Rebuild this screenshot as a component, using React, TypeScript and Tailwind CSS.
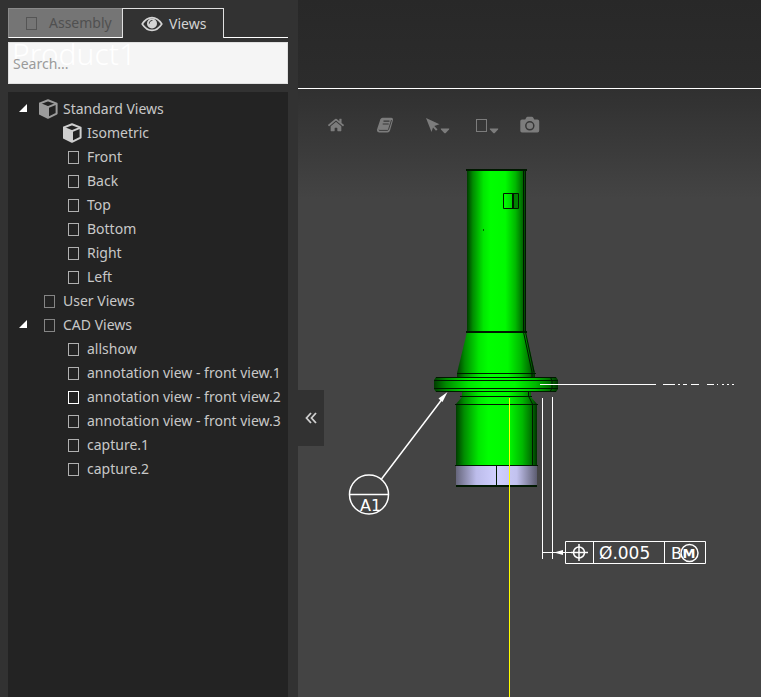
import React, { useState } from 'react';
import { FaHome } from 'react-icons/fa';

type View = { name: string; cube?: boolean; active?: boolean };
type Group = { name: string; cube?: boolean; views: View[] };

const groups: Group[] = [
  {
    name: 'Standard Views',
    cube: true,
    views: [
      { name: 'Isometric', cube: true },
      { name: 'Front' },
      { name: 'Back' },
      { name: 'Top' },
      { name: 'Bottom' },
      { name: 'Right' },
      { name: 'Left' },
    ],
  },
  { name: 'User Views', views: [] },
  {
    name: 'CAD Views',
    views: [
      { name: 'allshow' },
      { name: 'annotation view - front view.1' },
      { name: 'annotation view - front view.2', active: true },
      { name: 'annotation view - front view.3' },
      { name: 'capture.1' },
      { name: 'capture.2' },
    ],
  },
];

const Box = ({ className = 'border-[#a5a5a5]' }: { className?: string }) => (
  <span className={`inline-block h-[13px] w-[11px] shrink-0 border ${className}`} />
);

const CubeIcon = ({ className }: { className: string }) => (
  <svg viewBox="1 0 20 20" className={`h-5 w-5 shrink-0 ${className}`}>
    <path d="M10 1.3 18.6 4.6V14.6L10 18.8 1.4 14.6V4.6Z" fill="none" stroke="currentColor" strokeWidth="2" strokeLinejoin="round" />
    <path d="M1.4 4.8 10 8.4V18.8L1.4 14.6Z" fill="currentColor" />
    <path d="M1.4 4.6 10 8.2 18.6 4.6M10 8.2V18.8" fill="none" stroke="currentColor" strokeWidth="2" strokeLinejoin="round" />
  </svg>
);

const EyeIcon = () => (
  <svg viewBox="0 0 22 16" className="h-4 w-[22px] shrink-0">
    <path d="M1.2 8C4 3.6 7.3 1.6 11 1.6S18 3.6 20.8 8C18 12.4 14.7 14.4 11 14.4S4 12.4 1.2 8Z" fill="none" stroke="currentColor" strokeWidth="1.6" />
    <circle cx="11" cy="7.5" r="5" fill="currentColor" />
    <path d="M8.3 7.2C8.3 5.5 9.4 4.5 11 4.5" fill="none" stroke="#323232" strokeWidth="1" strokeLinecap="round" />
  </svg>
);

const BookIcon = () => (
  <svg viewBox="0 0 18 16" className="h-4 w-[18px]">
    <path d="M6.5 0.8H15.5Q17.4 1.2 17 3L14 13.5Q13.4 15.4 11.5 15.4H3Q0.6 15 1 12.5L4.3 2.5Q5 0.8 6.5 0.8Z" fill="currentColor" />
    <path d="M7.5 4.2H13.5M6.7 7H12.7" stroke="#363636" strokeWidth="1.2" />
    <path d="M2.8 12.8Q2.8 13.4 4 13.4H11.3Q12.2 13.4 12.5 12.5L15.5 3" fill="none" stroke="#363636" strokeWidth="0.9" />
  </svg>
);

const CursorIcon = () => (
  <svg viewBox="0 0 16 16" className="h-4 w-4">
    <path d="M2 1 15.5 7.2 10.3 9 13.5 12.5 12 13.8 9 10.5 7.5 15Z" fill="currentColor" />
  </svg>
);

const CameraIcon = () => (
  <svg viewBox="0 0 20 18" className="h-[18px] w-5">
    <path d="M2 3.5H5.2L6.5 1.3Q6.8 0.8 7.5 0.8H12Q12.7 0.8 13 1.3L14.3 3.5H17.5Q19.2 3.5 19.2 5.2V14.8Q19.2 16.5 17.5 16.5H2Q0.3 16.5 0.3 14.8V5.2Q0.3 3.5 2 3.5Z" fill="currentColor" />
    <circle cx="9.8" cy="9.8" r="4" fill="none" stroke="#363636" strokeWidth="1.5" />
  </svg>
);

const Caret = () => (
  <svg viewBox="0 0 10 6" className="h-[6px] w-[10px]">
    <path d="M1 0.5H9Q9.5 0.8 9 1.4L5.5 5.2Q5 5.5 4.5 5.2L1 1.4Q0.5 0.8 1 0.5Z" fill="currentColor" />
  </svg>
);

const TreeIcon = ({ cube, className, boxClass }: { cube?: boolean; className: string; boxClass?: string }) => (
  <span className="flex w-5 shrink-0 items-center justify-center">
    {cube ? <CubeIcon className={className} /> : <Box className={boxClass} />}
  </span>
);

const ViewTree = () => {
  const [closed, setClosed] = useState<string[]>([]);

  const toggle = (name: string) =>
    setClosed(closed.includes(name) ? closed.filter((n) => n !== name) : [...closed, name]);

  return (
    <ul className="flex-1 bg-[#232323] pt-[5px] text-[#c8c8c8]">
      {groups.map((group) => (
        <li key={group.name}>
          <button onClick={() => toggle(group.name)} className="flex h-6 w-full items-center pl-[10px] whitespace-nowrap">
            <span className="w-[21px] shrink-0">
              {group.views.length > 0 && (
                <svg viewBox="0 0 10 10" className="h-[10px] w-[10px]">
                  <path d="M9 0V8H1Z" fill="#fff" />
                </svg>
              )}
            </span>
            <TreeIcon cube={group.cube} className="text-[#9c9c9c]" boxClass="border-[#858585]" />
            <span className="pl-1">{group.name}</span>
          </button>
          {!closed.includes(group.name) && (
            <ul>
              {group.views.map((view) => (
                <li key={view.name}>
                  <button className="flex h-6 w-full items-center pl-[55px] whitespace-nowrap">
                    <TreeIcon
                      cube={view.cube}
                      className="text-[#cfcfcf]"
                      boxClass={view.active ? 'border-white' : 'border-[#b0b0b0]'}
                    />
                    <span className="pl-1">{view.name}</span>
                  </button>
                </li>
              ))}
            </ul>
          )}
        </li>
      ))}
    </ul>
  );
};

const Sidebar = () => (
  <aside className="relative flex w-[298px] shrink-0 flex-col bg-[#323232] px-2 pt-2 pr-[10px]">
    <div className="flex h-[30px]">
      <button className="flex w-[114px] items-center gap-3 border border-r-0 border-[#8a8a8a] border-b-white bg-[#757575] pl-[17px] text-[#505050]">
        <Box className="border-[#555555]" />
        Assembly
      </button>
      <button className="flex w-[102px] items-center gap-[6px] border border-b-0 border-[#e0e0e0] pl-[18px] text-[#d4d4d4]">
        <EyeIcon />
        Views
      </button>
      <div className="flex-1 border-b border-white" />
    </div>
    <div className="relative mt-1 mb-2 bg-[#f5f5f5]">
      <h1 className="pointer-events-none absolute -top-[6px] left-1 text-[30px] leading-9 font-light text-white">Product1</h1>
      <input
        type="text"
        aria-label="Search views"
        placeholder="Search..."
        className="relative block h-[42px] w-full border border-[#e0e0e0] bg-transparent px-1 text-[#333333] outline-none placeholder:text-[#9a9a9a]"
      />
    </div>
    <ViewTree />
    <button
      aria-label="Collapse panel"
      className="absolute top-[390px] left-full flex h-14 w-[26px] items-center justify-center bg-[#323232] text-[#d0d0d0]"
    >
      <svg viewBox="0 0 12 12" className="h-3 w-3">
        <path d="M6 1 1.5 6 6 11M11 1 6.5 6 11 11" fill="none" stroke="currentColor" strokeWidth="1.8" />
      </svg>
    </button>
  </aside>
);

const Toolbar = () => (
  <div className="flex h-14 items-center pt-4 pl-[30px] text-[#7c7c7c]">
    <button aria-label="Home" className="w-12"><FaHome className="h-4 w-4" /></button>
    <button aria-label="Model tree" className="w-12"><BookIcon /></button>
    <button aria-label="Select" className="flex w-12 items-center">
      <CursorIcon />
      <span className="pt-3"><Caret /></span>
    </button>
    <button aria-label="Display mode" className="flex w-12 items-center pl-1">
      <Box className="border-[#7c7c7c]" />
      <span className="pt-3 pl-[2px]"><Caret /></span>
    </button>
    <button aria-label="Capture"><CameraIcon /></button>
  </div>
);

const Model = () => (
  <svg viewBox="298 145 463 552" preserveAspectRatio="xMidYMin meet" className="h-0 w-full flex-1">
    <defs>
      <linearGradient id="steel">
        <stop offset="0" stopColor="#003c00" />
        <stop offset="0.1" stopColor="#008c00" />
        <stop offset="0.28" stopColor="#00e800" />
        <stop offset="0.4" stopColor="#00ff00" />
        <stop offset="0.65" stopColor="#00fa00" />
        <stop offset="0.82" stopColor="#00b800" />
        <stop offset="0.95" stopColor="#006400" />
        <stop offset="1" stopColor="#003000" />
      </linearGradient>
      <linearGradient id="base">
        <stop offset="0" stopColor="#66667c" />
        <stop offset="0.25" stopColor="#bcbcea" />
        <stop offset="0.5" stopColor="#d0d0ff" />
        <stop offset="0.75" stopColor="#c2c2ee" />
        <stop offset="1" stopColor="#5c5c70" />
      </linearGradient>
    </defs>

    {/* shaft, cone, flange, collar, body, base */}
    <g fill="url(#steel)">
      <path d="M467 169H526V332H467Z" />
      <path d="M467 332H526L535 373V377H457V373Z" />
      <path d="M436 377H556L558 380V389L556 392H436L434 389V380Z" />
      <path d="M462 392H531V397L537 404V465H456V404L462 397Z" />
    </g>
    <path d="M456 465H537V486H456Z" fill="url(#base)" />
    <g fill="none" stroke="#001800" strokeWidth="1">
      <path d="M466 169.5H527M466 170.5H527M466 331.5H527M466 332.5H527" />
      <path d="M523.5 170V332L532 372V377M525.5 170V332L534 372" />
      <path d="M457 373.5H536M436 377.5H556M434 380.5H558M434 388.5H558M436 391.5H556" />
      <path d="M550.5 377L552 381V388L550.5 391" />
      <path d="M460 396.5H532M455 404.5H538M455 465.5H538M456 485.5H537M456 486.5H537" />
      <path d="M528.5 392V396L532.5 404V465M496.5 466V486" />
      <path d="M503.5 193.5H518.5V208.5H503.5ZM512.5 193V208M513.5 193V208" />
    </g>
    <path d="M514 194H518V208H514Z" fill="#008200" />
    <path d="M483 229H484V231H483Z" fill="#006400" />

    {/* axes and extension lines */}
    <path d="M509 398H510V697H509Z" fill="#ffff00" />
    <g fill="none" stroke="#fff" strokeWidth="1">
      <path d="M540 384.5H656M663 384.5H675M678 384.5H680M683 384.5H687M691 384.5H699M707 384.5H714M717 384.5H718M722 384.5H724M727 384.5H729M732 384.5H734" />
      <path d="M542.5 398V559M552.5 397V559M543 552.5H588" />
      <path d="M565.5 541.5H705.5V563.5H565.5ZM593.5 541V564M664.5 541V564" />
    </g>
    <path d="M554 552.5 563 550V555Z" fill="#fff" />

    {/* datum target */}
    <g fill="none" stroke="#fff" strokeWidth="1.5">
      <circle cx="369" cy="494.5" r="19.5" />
      <path d="M349 494.5H389M381.5 479 443 398" />
    </g>
    <path d="M447.5 392 438.5 398.5 442.5 402Z" fill="#fff" />

    {/* feature control frame */}
    <g fill="none" stroke="#fff" strokeWidth="1.5">
      <circle cx="579" cy="552.5" r="5.5" />
      <path d="M579 544V561M571 552.5H588" />
      <circle cx="689.5" cy="553" r="8.5" />
    </g>
    <g fill="#fff" fontFamily="'DejaVu Sans', sans-serif">
      <text x="360" y="511" fontSize="16">A1</text>
      <text x="599" y="559" fontSize="17">Ø.005</text>
      <text x="671" y="559" fontSize="16">B</text>
      <text x="689" y="558" fontSize="13" fontWeight="700" textAnchor="middle">M</text>
    </g>
  </svg>
);

export default function App() {
  return (
    <div className="flex min-h-screen bg-[#444444] font-['Noto_Sans','Open_Sans',sans-serif] text-[14px] leading-5">
      <Sidebar />
      <main className="flex flex-1 flex-col">
        <div className="h-[89px] border-b border-white bg-linear-to-b from-[#282828] to-[#2c2c2c]" />
        <div className="flex flex-1 flex-col bg-linear-to-b from-[#303030] to-[#444444] to-[110px]">
          <Toolbar />
          <Model />
        </div>
      </main>
    </div>
  );
}
